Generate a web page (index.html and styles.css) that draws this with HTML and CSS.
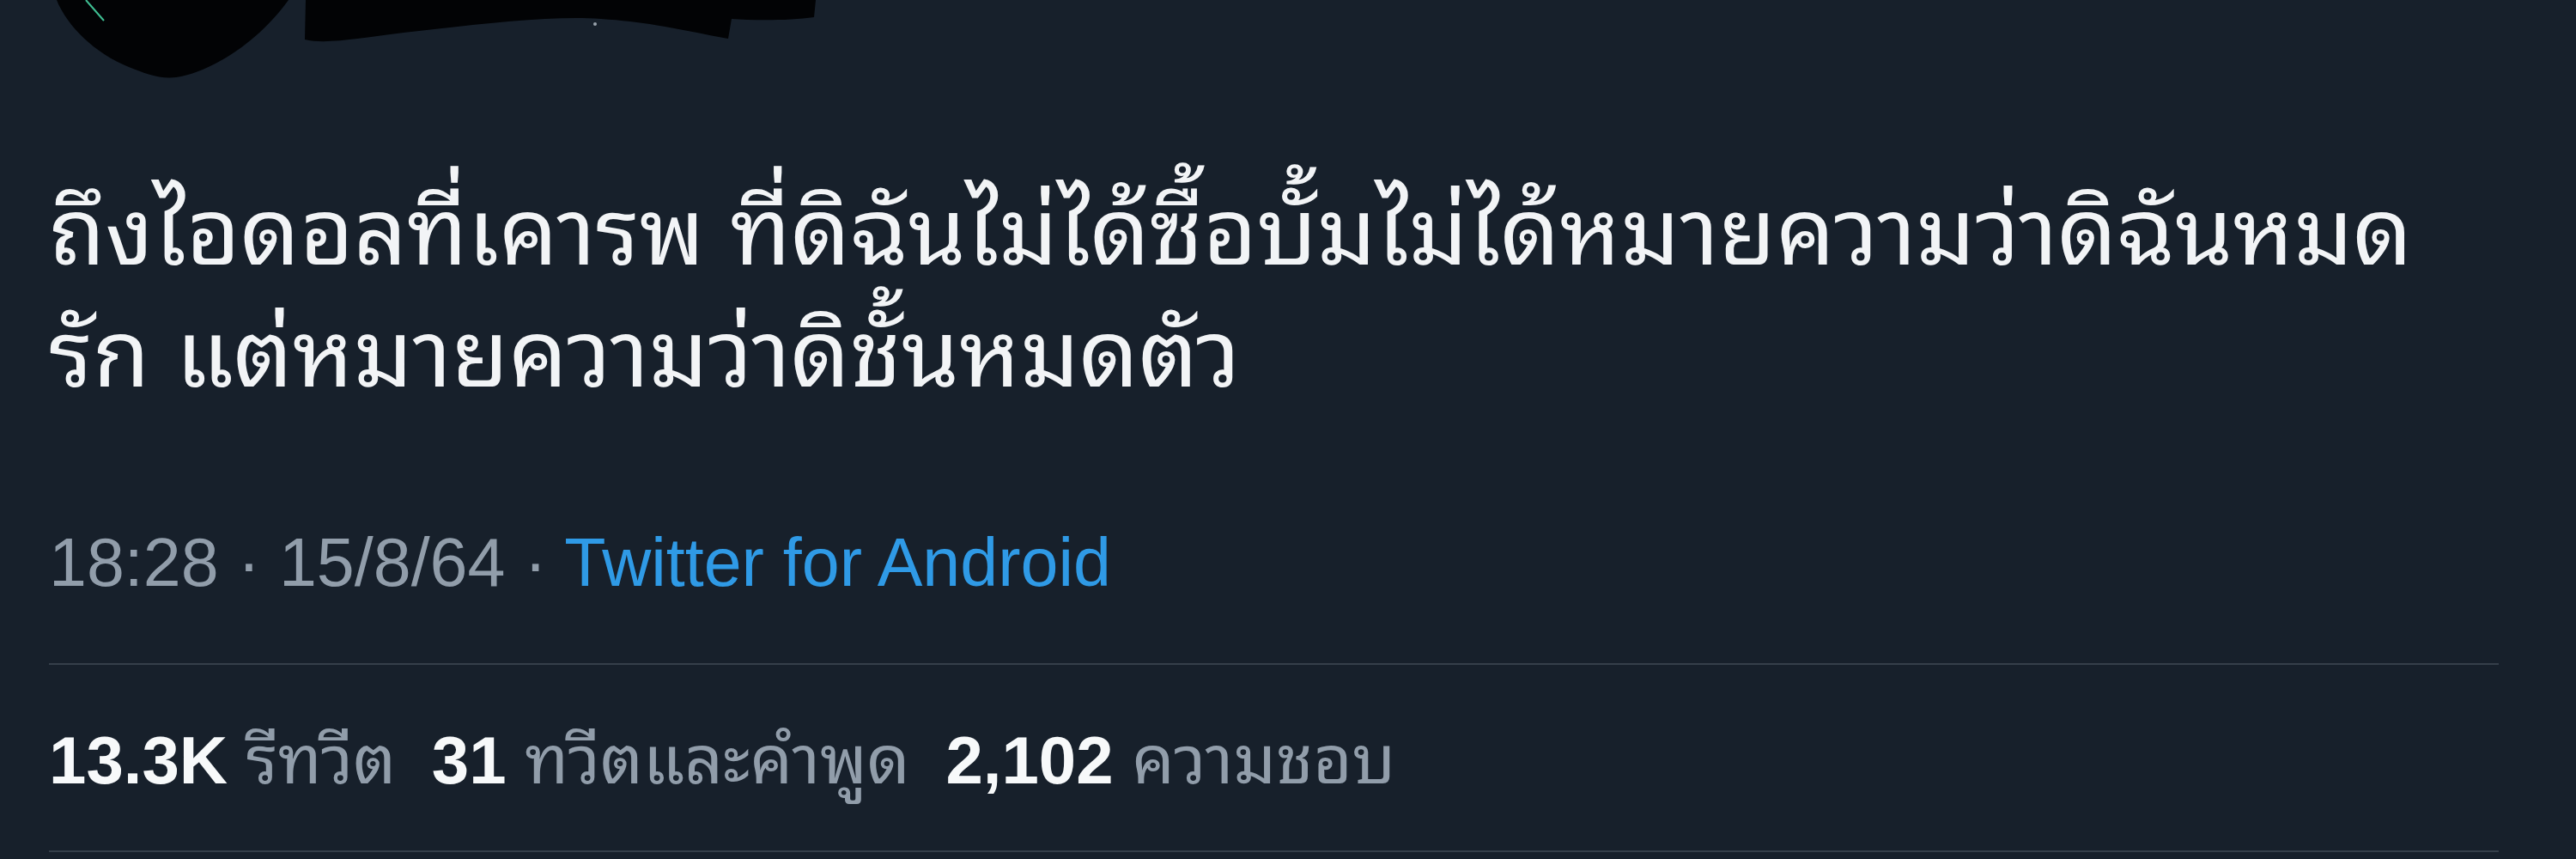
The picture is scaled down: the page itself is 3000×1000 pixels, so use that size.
FILE: index.html
```html
<!DOCTYPE html>
<html>
    <head>
        <link rel="stylesheet" href="styles.css">
    </head>
    <body>
        <div class="head">
            <svg class="scribble" width="1000" height="110" viewBox="0 0 1000 110">
                <path d="M66 0 C78 30 110 62 150 78 C170 86 185 92 205 90 C245 84 300 50 336 0 Z" fill="#020305"/>
                <line x1="100" y1="0" x2="121" y2="24" stroke="#3fbf93" stroke-width="2"/>
                <path d="M356 0 L355 46 C380 52 420 44 470 38 C560 28 640 18 700 22 C760 26 800 36 848 45 L852 22 C880 24 920 24 948 20 L950 0 Z" fill="#020305"/>
                <circle cx="693" cy="28" r="2" fill="#9aa3ad"/>
            </svg>
        </div>

        <div class="tweet">
            <div class="text">ถึงไอดอลที่เคารพ ที่ดิฉันไม่ได้ซื้อบั้มไม่ได้หมายความว่าดิฉันหมด<br>รัก แต่หมายความว่าดิชั้นหมดตัว</div>

            <div class="meta">18:28 · 15/8/64 · <a class="source">Twitter for Android</a></div>

            <div class="rule"></div>

            <div class="stats">
                <span class="num">13.3K</span> <span class="lbl">รีทวีต</span>
                <span class="num gap">31</span> <span class="lbl">ทวีตและคำพูด</span>
                <span class="num gap">2,102</span> <span class="lbl">ความชอบ</span>
            </div>

            <div class="rule"></div>
        </div>
    </body>
</html>
```

FILE: styles.css
```css
body {
    margin: 0;
    background: #17202b;
    color: #f2f4f6;
    font-family: "Liberation Sans", "Noto Sans Thai Looped", "Noto Sans Thai", "Noto Sans", sans-serif;
}

.head {
    height: 200px;
}
.scribble {
    display: block;
}

.tweet {
    padding: 0 90px 0 57px;
}

.text {
    font-size: 108px;
    line-height: 142px;
    white-space: nowrap;
}

.meta {
    margin-top: 124px;
    font-size: 79px;
    line-height: 94px;
    color: #919daa;
}
.source {
    color: #2f9ae6;
}

.rule {
    height: 2px;
    background: #353f4a;
}
.meta + .rule {
    margin-top: 70px;
}

.stats {
    margin: 64px 0 58px;
    font-size: 78px;
    line-height: 94px;
    white-space: nowrap;
}
.num {
    font-weight: bold;
    color: #f7f9fa;
}
.num.gap {
    margin-left: 20px;
}
.lbl {
    color: #919daa;
}
```
